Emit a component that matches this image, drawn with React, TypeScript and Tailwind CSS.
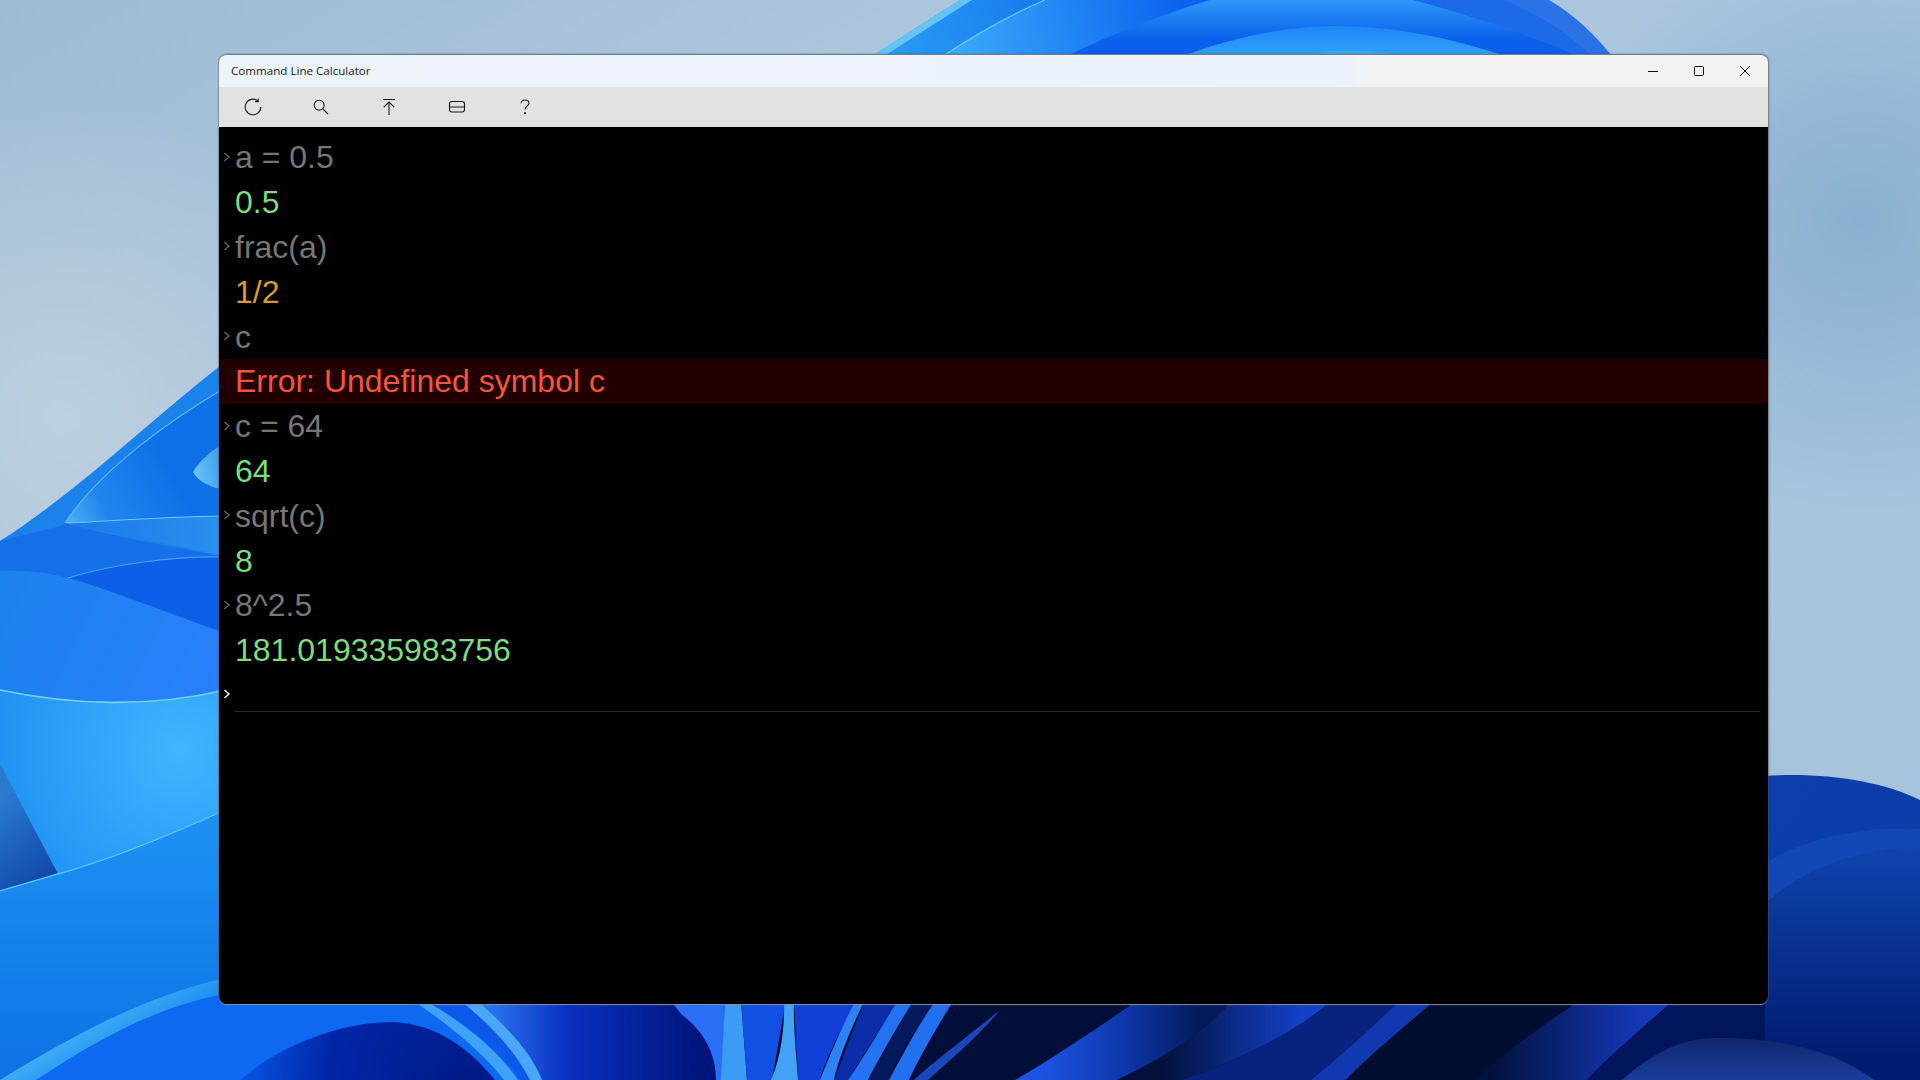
const ROWS = [
  { kind: 'input', text: 'a = 0.5' },
  { kind: 'value', text: '0.5' },
  { kind: 'input', text: 'frac(a)' },
  { kind: 'fraction', text: '1/2' },
  { kind: 'input', text: 'c' },
  { kind: 'error', text: 'Error: Undefined symbol c' },
  { kind: 'input', text: 'c = 64' },
  { kind: 'value', text: '64' },
  { kind: 'input', text: 'sqrt(c)' },
  { kind: 'value', text: '8' },
  { kind: 'input', text: '8^2.5' },
  { kind: 'value', text: '181.019335983756' },
]

function Wallpaper() {
  return (
    <svg className="absolute inset-0 h-full w-full" viewBox="0 0 1920 1080" preserveAspectRatio="none">
      <defs>
        <linearGradient id="sky" x1="0" y1="0" x2="1" y2="1">
          <stop offset="0" stopColor="#9fbcd4" />
          <stop offset="0.3" stopColor="#adc7de" />
          <stop offset="1" stopColor="#a5c2dc" />
        </linearGradient>
        <radialGradient id="skyRight" cx="1860" cy="220" r="300" gradientUnits="userSpaceOnUse">
          <stop offset="0" stopColor="#8aafd0" />
          <stop offset="1" stopColor="#8aafd0" stopOpacity="0" />
        </radialGradient>
        <radialGradient id="skyLeft" cx="60" cy="420" r="320" gradientUnits="userSpaceOnUse">
          <stop offset="0" stopColor="#bccfde" />
          <stop offset="1" stopColor="#bccfde" stopOpacity="0" />
        </radialGradient>
        <linearGradient id="tip" x1="65" y1="523" x2="170" y2="470" gradientUnits="userSpaceOnUse">
          <stop offset="0" stopColor="#52b2f5" />
          <stop offset="0.35" stopColor="#1f86ee" />
          <stop offset="1" stopColor="#0e70e6" />
        </linearGradient>
        <linearGradient id="under" x1="65" y1="530" x2="225" y2="540" gradientUnits="userSpaceOnUse">
          <stop offset="0" stopColor="#1a78e8" />
          <stop offset="1" stopColor="#2a90f0" />
        </linearGradient>
        <linearGradient id="smallTip" x1="193" y1="472" x2="225" y2="465" gradientUnits="userSpaceOnUse">
          <stop offset="0" stopColor="#6cc2f6" />
          <stop offset="1" stopColor="#3a9cf0" />
        </linearGradient>
        <linearGradient id="bigPetal" x1="0" y1="580" x2="218" y2="690" gradientUnits="userSpaceOnUse">
          <stop offset="0" stopColor="#1c82ee" />
          <stop offset="1" stopColor="#2a7ffa" />
        </linearGradient>
        <radialGradient id="bright" cx="180" cy="750" r="220" gradientUnits="userSpaceOnUse">
          <stop offset="0" stopColor="#40b6ff" />
          <stop offset="1" stopColor="#1a8cf0" />
        </radialGradient>
        <linearGradient id="wedge" x1="0" y1="800" x2="58" y2="874" gradientUnits="userSpaceOnUse">
          <stop offset="0" stopColor="#2a7ad0" />
          <stop offset="1" stopColor="#0f47a8" />
        </linearGradient>
        <linearGradient id="low" x1="120" y1="830" x2="120" y2="1060" gradientUnits="userSpaceOnUse">
          <stop offset="0" stopColor="#1c90f2" />
          <stop offset="1" stopColor="#0d74e6" />
        </linearGradient>
        <linearGradient id="band" x1="100" y1="1000" x2="130" y2="1050" gradientUnits="userSpaceOnUse">
          <stop offset="0" stopColor="#4ab8f8" />
          <stop offset="1" stopColor="#1c8cf0" />
        </linearGradient>
        <radialGradient id="navy" cx="470" cy="1085" r="240" gradientUnits="userSpaceOnUse">
          <stop offset="0" stopColor="#001a85" />
          <stop offset="0.6" stopColor="#0026a8" />
          <stop offset="1" stopColor="#0a5cea" />
        </radialGradient>
        <linearGradient id="fold" x1="480" y1="1040" x2="700" y2="1040" gradientUnits="userSpaceOnUse">
          <stop offset="0" stopColor="#2f7cf8" />
          <stop offset="0.4" stopColor="#0a2fc0" />
          <stop offset="1" stopColor="#00157c" />
        </linearGradient>
        <linearGradient id="stripeA" x1="1040" y1="1040" x2="1200" y2="1040" gradientUnits="userSpaceOnUse">
          <stop offset="0" stopColor="#1c54e2" />
          <stop offset="0.55" stopColor="#0e35a8" />
          <stop offset="1" stopColor="#041a58" />
        </linearGradient>
        <linearGradient id="stripeB" x1="1160" y1="1040" x2="1300" y2="1040" gradientUnits="userSpaceOnUse">
          <stop offset="0" stopColor="#02103a" />
          <stop offset="1" stopColor="#1440c8" />
        </linearGradient>
        <linearGradient id="stripeC" x1="1490" y1="1040" x2="1640" y2="1040" gradientUnits="userSpaceOnUse">
          <stop offset="0" stopColor="#02103c" />
          <stop offset="1" stopColor="#1438b8" />
        </linearGradient>
        <linearGradient id="dome" x1="1750" y1="1040" x2="1750" y2="1080" gradientUnits="userSpaceOnUse">
          <stop offset="0" stopColor="#11286f" />
          <stop offset="1" stopColor="#1a3c9c" />
        </linearGradient>
        <linearGradient id="rightA" x1="1780" y1="780" x2="1900" y2="880" gradientUnits="userSpaceOnUse">
          <stop offset="0" stopColor="#0d3eac" />
          <stop offset="1" stopColor="#0a3ca8" />
        </linearGradient>
        <linearGradient id="rightC" x1="1850" y1="850" x2="1850" y2="1060" gradientUnits="userSpaceOnUse">
          <stop offset="0" stopColor="#0f43ad" />
          <stop offset="1" stopColor="#011c70" />
        </linearGradient>
        <linearGradient id="topA" x1="880" y1="50" x2="1060" y2="0" gradientUnits="userSpaceOnUse">
          <stop offset="0" stopColor="#2a9cf4" />
          <stop offset="1" stopColor="#1478ee" />
        </linearGradient>
        <linearGradient id="topB" x1="960" y1="50" x2="1180" y2="0" gradientUnits="userSpaceOnUse">
          <stop offset="0" stopColor="#38a8fa" />
          <stop offset="1" stopColor="#0b62ee" />
        </linearGradient>
        <linearGradient id="topC" x1="1300" y1="0" x2="1300" y2="40" gradientUnits="userSpaceOnUse">
          <stop offset="0" stopColor="#2c98f8" />
          <stop offset="1" stopColor="#0b5fec" />
        </linearGradient>
        <linearGradient id="topD" x1="1340" y1="26" x2="1340" y2="54" gradientUnits="userSpaceOnUse">
          <stop offset="0" stopColor="#1f86f4" />
          <stop offset="1" stopColor="#2f9ffa" />
        </linearGradient>
      </defs>

      <rect width="1920" height="1080" fill="url(#sky)" />
      <rect width="1920" height="1080" fill="url(#skyRight)" />
      <rect width="1920" height="1080" fill="url(#skyLeft)" />

      {/* left bloom */}
      <path d="M0 541C80 490 150 420 225 362V1080H0Z" fill="#1b82ec" />
      <path d="M225 388C170 420 100 470 65 523C90 530 150 525 225 516Z" fill="url(#tip)" />
      <path d="M225 388C170 420 100 470 65 523" fill="none" stroke="#5fb8f4" strokeWidth="1.2" />
      <path d="M65 523C120 535 180 545 225 557V516C150 518 100 522 65 523Z" fill="url(#under)" />
      <path d="M65 523C100 522 150 517 225 516" fill="none" stroke="#74c8f8" strokeWidth="1.2" />
      <path d="M193 472C200 460 212 450 225 443V490C212 488 198 482 193 472Z" fill="url(#smallTip)" />
      <path d="M0 541C40 530 60 528 65 523C120 538 180 548 225 557V570L68 578 0 572Z" fill="#1570e8" />
      <path d="M68 578C110 565 170 556 225 557V632L213 629C160 610 110 590 68 578Z" fill="#0c5ee6" />
      <path d="M68 578C110 565 170 556 225 557" fill="none" stroke="#4aa0f4" strokeWidth="1.2" />
      <path d="M0 571C25 570 50 573 68 578C110 590 160 610 213 629L225 632V690C150 708 70 705 0 690Z" fill="url(#bigPetal)" />
      <path d="M0 690C70 705 150 708 225 690V810C170 835 110 860 58 874L0 764Z" fill="url(#bright)" />
      <path d="M0 690C70 705 150 708 225 690" fill="none" stroke="#74d2fb" strokeWidth="1.6" />
      <path d="M0 764L58 874 0 891Z" fill="url(#wedge)" />
      <path d="M0 891L58 874C110 860 170 835 225 810V978C130 1000 50 1050 0 1080Z" fill="url(#low)" />
      <path d="M0 891L58 874C110 860 170 835 225 810" fill="none" stroke="#66c6f8" strokeWidth="1.3" />
      <path d="M0 1080C50 1050 130 1000 225 978V994C150 1008 90 1045 36 1080Z" fill="url(#band)" />
      <path d="M36 1080C90 1045 150 1008 225 994V1000H500L580 1080Z" fill="#0d6af0" />

      {/* bottom petals */}
      <rect x="660" y="990" width="1260" height="90" fill="#020e3a" />
      <path d="M240 1080C280 1045 340 1022 394 1022C440 1025 470 1050 495 1080Z" fill="url(#navy)" />
      <path d="M412 1000C450 1025 485 1055 504 1080H518C498 1050 460 1020 424 1000Z" fill="#40a2f6" />
      <path d="M424 1000C462 1020 500 1050 520 1080H534C512 1050 490 1025 465 1000Z" fill="#0c58ea" />
      <path d="M460 1000C490 1025 515 1050 530 1080H545C528 1050 505 1020 480 1000Z" fill="#4aa6f6" />
      <path d="M476 1000C505 1025 530 1050 542 1080H722C716 1045 700 1020 670 1000Z" fill="url(#fold)" />
      <path d="M670 1000H725L722 1080H716C716 1055 705 1032 682 1015Z" fill="#2a6ef5" />
      <path d="M725 1000H741L747 1080H721Z" fill="#3c9cf5" />
      <path d="M741 1000H786L772 1080H747Z" fill="#1150e2" />
      <path d="M784 1000H794C793 1030 797 1060 798 1080H771C780 1060 785 1030 784 1000Z" fill="#44a2f6" />
      <path d="M794 1000H858C840 1030 825 1060 820 1080H798Z" fill="#1140d6" />
      <path d="M856 1000H865C850 1030 838 1060 834 1080H820C828 1060 840 1030 856 1000Z" fill="#2c82f6" />
      <path d="M865 1000H900C880 1030 860 1060 848 1080H834Z" fill="#0c2da8" />
      <path d="M898 1000H914C895 1030 878 1060 868 1080H848C862 1060 880 1030 898 1000Z" fill="#2272f2" />
      <path d="M914 1000H938C915 1030 895 1060 889 1080H868Z" fill="#04185e" />
      <path d="M936 1000H954C935 1030 918 1060 909 1080H889C900 1060 915 1030 936 1000Z" fill="#2070f0" />
      <path d="M1000 1010C970 1035 935 1060 914 1080H928C950 1060 980 1035 1000 1010Z" fill="#1a48b8" />
      <path d="M1138 1000H1232C1210 1030 1160 1060 1117 1080H1015C1050 1060 1095 1030 1138 1000Z" fill="url(#stripeA)" />
      <path d="M1232 1000H1332C1300 1030 1240 1060 1182 1080H1117C1160 1060 1210 1030 1232 1000Z" fill="url(#stripeB)" />
      <path d="M1332 1000H1400C1370 1030 1335 1060 1311 1080H1182C1240 1060 1300 1030 1332 1000Z" fill="#08227e" />
      <path d="M1400 1000H1436C1400 1030 1365 1060 1346 1080H1311C1335 1060 1370 1030 1400 1000Z" fill="#1238b0" />
      <path d="M1436 1000H1581C1535 1030 1495 1060 1475 1080H1346C1365 1060 1400 1030 1436 1000Z" fill="#020e30" />
      <path d="M1581 1000H1674C1640 1030 1605 1060 1587 1080H1475C1495 1060 1535 1030 1581 1000Z" fill="url(#stripeC)" />

      {/* bottom right */}
      <path d="M1674 1000H1920V1080H1587C1605 1060 1640 1030 1674 1000Z" fill="#01155c" />
      <path d="M1765 1080V776C1820 772 1880 780 1920 800V1080Z" fill="url(#rightA)" />
      <path d="M1765 864C1800 840 1860 826 1920 829V1080H1765Z" fill="#1148b6" />
      <path d="M1765 904C1800 870 1860 846 1920 848V1080H1765Z" fill="url(#rightC)" />
      <path d="M1622 1080C1650 1055 1680 1038 1716 1038C1780 1038 1835 1050 1874 1080Z" fill="url(#dome)" />

      {/* top bloom */}
      <path d="M872 56L960 0H1520C1560 20 1590 40 1612 56Z" fill="url(#topA)" />
      <path d="M872 56L960 0H972L884 56Z" fill="#64c4f6" />
      <path d="M943 56C975 35 1010 15 1045 0H1210C1160 15 1110 35 1067 56Z" fill="url(#topB)" />
      <path d="M943 56C975 35 1010 15 1045 0" fill="none" stroke="#6ac8f8" strokeWidth="1.2" />
      <path d="M1067 56C1110 35 1160 15 1210 0H1413C1470 15 1530 35 1578 56Z" fill="url(#topC)" />
      <path d="M1183 56C1230 38 1285 26 1336 26C1395 26 1450 38 1505 56Z" fill="url(#topD)" />
      <path d="M1307 56C1320 52 1335 51 1345 51C1370 51 1390 53 1408 56Z" fill="#3ca8fa" />
      <path d="M1413 0H1505C1540 15 1570 35 1592 56H1578C1530 35 1470 15 1413 0Z" fill="#1c6ae8" />
      <path d="M1505 0H1549C1575 15 1595 35 1612 56H1592C1570 35 1540 15 1505 0Z" fill="#2a72e6" />
    </svg>
  )
}

function Chevron({ white }: { white?: boolean }) {
  return (
    <svg width="8" height="10" viewBox="0 0 8 10" className={white ? 'text-white' : 'text-[#6e6e6e]'}>
      <path d="M1.5 1L6 5 1.5 9" fill="none" stroke="currentColor" strokeWidth={white ? 1.4 : 1.2} />
    </svg>
  )
}

function ToolIcon({ children }: { children: React.ReactNode }) {
  return (
    <button type="button" className="flex h-10 w-[68px] items-center justify-center text-[#1a1a1a]">
      <svg width="18" height="18" viewBox="0 0 18 18" fill="none" stroke="currentColor" strokeWidth="1.1">
        {children}
      </svg>
    </button>
  )
}

function Row({ kind, text }: { kind: string; text: string }) {
  if (kind === 'input') {
    return (
      <div className="flex h-[44.8px] items-center pl-1 text-[#767676]">
        <span className="flex w-3 shrink-0 items-center pb-px">
          <Chevron />
        </span>
        <span>{text}</span>
      </div>
    )
  }
  const tone =
    kind === 'error'
      ? 'bg-[#220000] text-[#f5553f]'
      : kind === 'fraction'
        ? 'text-[#d99b2d]'
        : 'text-[#7ddc7d]'
  return <div className={`flex h-[44.8px] items-center pl-4 ${tone}`}>{text}</div>
}

export default function App() {
  return (
    <div className="relative h-[1080px] w-[1920px] overflow-hidden bg-[#a5c2dc] pl-[219px] pt-[54px]">
      <Wallpaper />
      <div className="relative flex h-[950px] w-[1549px] flex-col overflow-hidden rounded-lg border-t border-[#737f8a] shadow-[1px_0_2px_rgba(60,70,80,0.55),-1px_0_1px_rgba(60,70,80,0.35),0_1px_1px_rgba(170,170,170,0.9)]">
        <header className="flex h-8 shrink-0 items-center justify-between bg-[linear-gradient(90deg,#eef3fa_0%,#ecf2fa_73%,#f2f2f2_74%)]">
          <span className="pl-3 font-['Open_Sans',sans-serif] text-[11.6px] text-[#1a1a1a]">Command Line Calculator</span>
          <div className="flex items-center text-[#111]">
            <button type="button" className="flex h-8 w-[46px] items-center justify-center">
              <svg width="12" height="12" viewBox="0 0 12 12" fill="none" stroke="currentColor">
                <path d="M1 6.5H11" />
              </svg>
            </button>
            <button type="button" className="flex h-8 w-[46px] items-center justify-center">
              <svg width="12" height="12" viewBox="0 0 12 12" fill="none" stroke="currentColor">
                <rect x="1.5" y="1.5" width="9" height="9" rx="1" />
              </svg>
            </button>
            <button type="button" className="flex h-8 w-[46px] items-center justify-center">
              <svg width="12" height="12" viewBox="0 0 12 12" fill="none" stroke="currentColor">
                <path d="M1 1L11 11M11 1L1 11" />
              </svg>
            </button>
          </div>
        </header>

        <nav className="flex h-10 shrink-0 items-center bg-[#e2e2e2]">
          <ToolIcon>
            <path d="M13.9 2.9A7.8 7.8 0 1 0 16.8 9" />
            <path d="M14.2 0.4V3.6H11" />
          </ToolIcon>
          <ToolIcon>
            <circle cx="7.2" cy="7.2" r="5" />
            <path d="M10.8 10.8L16 16" />
          </ToolIcon>
          <ToolIcon>
            <path d="M3 1.5H15M9 17V4M3.8 9.2L9 4 14.2 9.2" />
          </ToolIcon>
          <ToolIcon>
            <rect x="1.5" y="3.5" width="15" height="10.5" rx="2.5" />
            <path d="M1.5 9H16.5" />
          </ToolIcon>
          <ToolIcon>
            <path d="M5 5.2C5 3.2 6.8 2 9 2S13 3.3 13 5.2C13 8 9 8 9 11.6" />
            <circle cx="9" cy="15" r="0.5" fill="currentColor" />
          </ToolIcon>
        </nav>

        <main className="flex-1 bg-black pt-2 font-['Liberation_Sans',Arial,sans-serif] text-[32px] leading-none">
          {ROWS.map((r, i) => (
            <Row key={i} kind={r.kind} text={r.text} />
          ))}
          <div className="flex h-[38px] items-center pl-1 pt-1">
            <Chevron white />
          </div>
          <div className="ml-4 mr-2 h-px bg-[#2c2c2c]" />
        </main>
      </div>
    </div>
  )
}
